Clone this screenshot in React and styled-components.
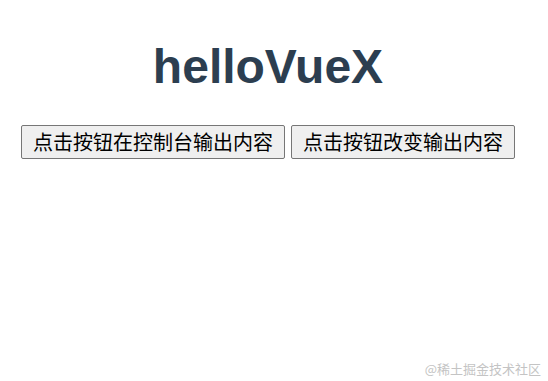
import React from "react";
import styled, { createGlobalStyle } from "styled-components";

const GlobalStyle = createGlobalStyle`
  html, body {
    margin: 0;
    padding: 0;
    background: #ffffff;
  }
  body {
    width: 548px;
    height: 381px;
    overflow: hidden;
    position: relative;
  }
`;

const AppStyled = styled.div`
  width: 536px;
  padding-top: 38px;
  font-family: "Liberation Sans", Arial, "Noto Sans CJK SC", sans-serif;
  text-align: center;
  color: #2c3e50;

  .title {
    font-size: 48px;
    font-weight: bold;
    margin: 0 0 29px 0;
    line-height: 58px;
  }
`;

const ButtonRow = styled.div`
  display: flex;
  justify-content: center;
  gap: 6px;
`;

const Button = styled.button`
  font-family: "Noto Sans CJK SC", "Microsoft YaHei", sans-serif;
  font-size: 20px;
  line-height: 28px;
  height: 34px;
  padding: 0 11px;
  color: #000000;
  background: #efefef;
  border: 1px solid #767676;
  border-radius: 2px;
`;

const Watermark = styled.div`
  position: absolute;
  right: 7px;
  bottom: 3px;
  font-family: "Noto Sans CJK SC", sans-serif;
  font-size: 13px;
  color: #c4c4c4;
`;

const App = () => {
  return (
    <>
      <GlobalStyle />
      <AppStyled>
        <h1 className="title">helloVueX</h1>
        <ButtonRow>
          <Button>点击按钮在控制台输出内容</Button>
          <Button>点击按钮改变输出内容</Button>
        </ButtonRow>
      </AppStyled>
      <Watermark>@稀土掘金技术社区</Watermark>
    </>
  );
};

export default App;
